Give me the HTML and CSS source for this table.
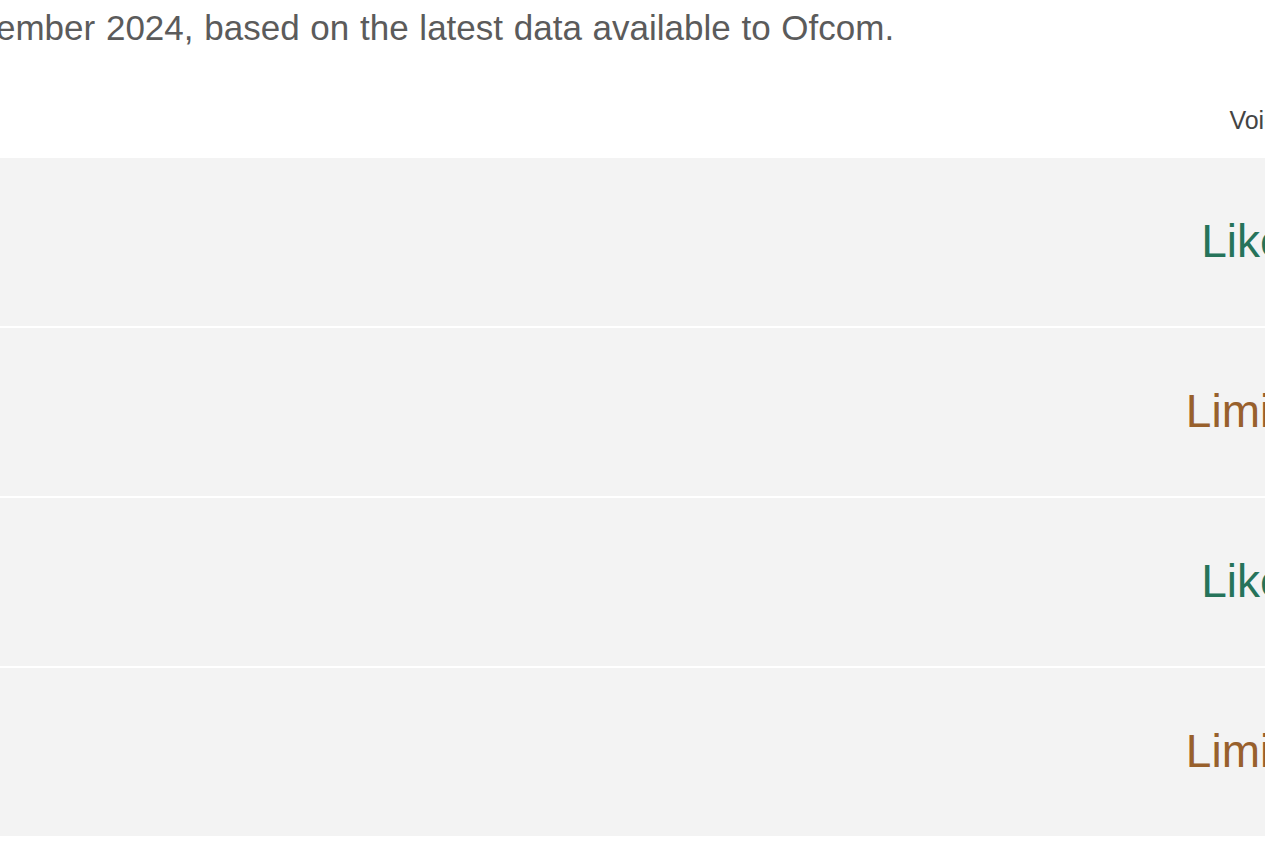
FILE: index.html
```html
<!DOCTYPE html>
<html lang="en">
<head>
<meta charset="utf-8">
<title>Coverage</title>
<link rel="stylesheet" href="styles.css">
</head>
<body>
<div class="page">
  <p class="intro">ember 2024, based on the latest data available to Ofcom.</p>
  <div class="table">
    <div class="head">
      <div class="cell-name"></div>
      <div class="cell-val head-label">Voice</div>
    </div>
    <div class="row">
      <div class="cell-name"></div>
      <div class="cell-val likely">Likely</div>
    </div>
    <div class="row">
      <div class="cell-name"></div>
      <div class="cell-val limited">Limited</div>
    </div>
    <div class="row">
      <div class="cell-name"></div>
      <div class="cell-val likely">Likely</div>
    </div>
    <div class="row">
      <div class="cell-name"></div>
      <div class="cell-val limited">Limited</div>
    </div>
  </div>
</div>
</body>
</html>
```

FILE: styles.css
```css
html, body {
  margin: 0;
  padding: 0;
  background: #ffffff;
  overflow: hidden;
}
body {
  width: 1265px;
  height: 843px;
  font-family: "Liberation Sans", Arial, sans-serif;
}
.page {
  width: 1700px;
  margin-left: -4px;
}
.intro {
  margin: 0;
  padding-top: 8px;
  font-size: 35px;
  line-height: 40px;
  word-spacing: 1px;
  color: #5b5b5b;
  white-space: nowrap;
}
.table {
  display: flex;
  flex-direction: column;
  gap: 2px;
}
.head, .row {
  display: flex;
  align-items: center;
}
.head {
  height: 108px;
  align-items: flex-end;
}
.head-label {
  font-size: 25px;
  color: #444444;
  padding-bottom: 21px;
}
.row {
  height: 168px;
  background: #f3f3f3;
}
.cell-name {
  width: 1114px;
  flex: none;
}
.cell-val {
  width: 300px;
  flex: none;
  text-align: center;
}
.row .cell-val {
  font-size: 46px;
  padding-bottom: 2px;
}
.likely {
  color: #26735a;
}
.limited {
  color: #98602c;
}
```
